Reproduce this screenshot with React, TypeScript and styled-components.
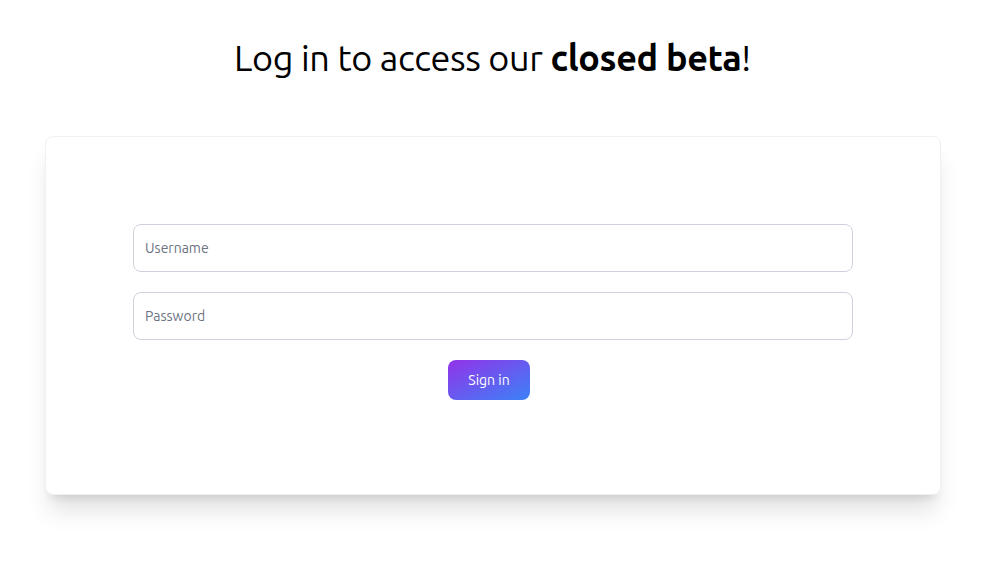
import React from "react";
import styled, { createGlobalStyle } from "styled-components";

const Global = createGlobalStyle`
  html, body { margin: 0; padding: 0; background: #ffffff; }
  body { font-family: Ubuntu, system-ui, "Noto Sans", sans-serif; color: #000; }
  * { box-sizing: border-box; }
`;

const Page = styled.main`
  display: flex;
  flex-direction: column;
  align-items: center;
  padding: 36px 0 90px;
`;

const Title = styled.h1`
  margin: 0;
  padding-right: 4px;
  font-size: 36px;
  line-height: 44px;
  font-weight: 400;
  letter-spacing: -0.36px;
  text-align: center;
`;

const Strong = styled.strong`
  font-weight: 700;
`;

const Card = styled.section`
  margin-top: 56px;
  width: 896px;
  margin-left: -3px;
  background: #fff;
  border: 1px solid #f1f1f3;
  border-radius: 8px;
  box-shadow: 0 20px 25px -5px rgba(0,0,0,0.12), 0 8px 10px -6px rgba(0,0,0,0.12);
  padding: 87px 87px 94px;
`;

const Form = styled.form`
  display: flex;
  flex-direction: column;
  align-items: center;
  gap: 20px;
`;

const Input = styled.input`
  width: 100%;
  height: 48px;
  border: 1px solid #d1d1dc;
  border-radius: 8px;
  padding: 0 11px;
  font-family: inherit;
  font-size: 14px;
  color: #111;
  outline: none;
  &::placeholder { color: #6b7280; }
`;

const Button = styled.button`
  height: 40px;
  padding: 0 20px;
  margin-right: 8px;
  border: none;
  border-radius: 8px;
  background: linear-gradient(to bottom right, #9333ea, #3b82f6);
  color: #fff;
  font-family: inherit;
  font-size: 14px;
  cursor: pointer;
`;

export default function App() {
  return (
    <>
      <Global />
      <Page>
        <Title>
          Log in to access our <Strong>closed beta</Strong>!
        </Title>
        <Card>
          <Form onSubmit={(e) => e.preventDefault()}>
            <Input type="text" placeholder="Username" />
            <Input type="password" placeholder="Password" />
            <Button type="submit">Sign in</Button>
          </Form>
        </Card>
      </Page>
    </>
  );
}
